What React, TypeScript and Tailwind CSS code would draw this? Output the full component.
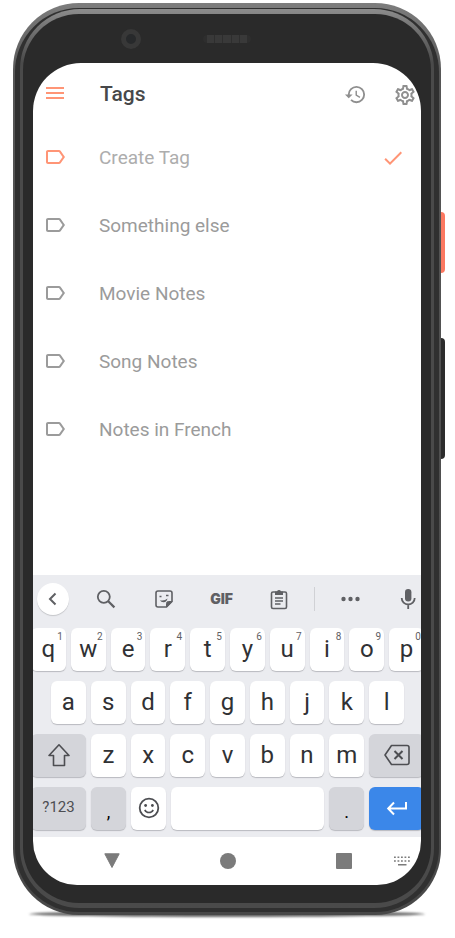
import { useState } from "react";
import type { ReactNode } from "react";
import {
  MdCheck,
  MdHistory,
  MdLabelOutline,
  MdMenu,
  MdOutlineSettings,
} from "react-icons/md";

const tags = ["Something else", "Movie Notes", "Song Notes", "Notes in French"];
const topRow = ["q", "w", "e", "r", "t", "y", "u", "i", "o", "p"];
const homeRow = ["a", "s", "d", "f", "g", "h", "j", "k", "l"];
const bottomRow = ["z", "x", "c", "v", "b", "n", "m"];

const keyTones = {
  light: "bg-white text-[#303134]",
  dark: "bg-[#d4d5da] text-[#4d4e52]",
  blue: "bg-[#3b87e9] text-white",
};

function Key({
  label,
  tone = "light",
  size = "min-w-0 flex-1",
  hint,
  children,
}: {
  label: string;
  tone?: keyof typeof keyTones;
  size?: string;
  hint?: string;
  children?: ReactNode;
}) {
  return (
    <button
      type="button"
      aria-label={label}
      className={`relative flex h-[43px] items-center justify-center rounded-md pb-0.5 text-2xl shadow-[0_1px_1px_#b9babf] ${size} ${keyTones[tone]}`}
    >
      {children ?? label}
      {hint && (
        <span className="absolute top-1 right-[3px] text-[10px] leading-[10px] text-[#5f6064]">
          {hint}
        </span>
      )}
    </button>
  );
}

function Tool({ label, children }: { label: string; children: ReactNode }) {
  return (
    <button
      type="button"
      aria-label={label}
      className="flex h-8 min-w-0 flex-1 items-center justify-center"
    >
      {children}
    </button>
  );
}

function Keyboard() {
  return (
    <section aria-label="Keyboard" className="bg-[#ebecf0] pb-[7px] text-[#5f6064]">
      <div className="-mr-4 flex h-[53px] items-center pb-1.5 pl-1">
        <button
          type="button"
          aria-label="Back"
          className="mr-2 flex size-8 items-center justify-center rounded-full bg-white shadow-[0_1px_1px_#c4c5c9]"
        >
          <svg viewBox="0 0 20 20" className="size-5" fill="none" stroke="currentColor" strokeWidth="2">
            <path d="M12.5 4.5 7 10l5.500 5.500" />
          </svg>
        </button>
        <Tool label="Search">
          <svg viewBox="0 0 20 20" className="size-5" fill="none" stroke="currentColor" strokeWidth="1.800">
            <circle cx="7.800" cy="7.800" r="6" />
            <path d="m12 12 6.400 6.400" strokeWidth="2.200" />
          </svg>
        </Tool>
        <Tool label="Stickers">
          <svg viewBox="0 0 20 20" className="size-5" fill="none" stroke="currentColor" strokeWidth="1.600">
            <path d="M4 2h12a2 2 0 0 1 2 2v8.500L12.500 18H4a2 2 0 0 1-2-2V4a2 2 0 0 1 2-2Z" />
            <path d="M18 12.500h-3.500a2 2 0 0 0-2 2V18Z" fill="currentColor" strokeWidth="1" />
            <path d="M5.500 7.500h2M12 6.500h2.500" />
            <path d="M6 11.200c3 .6 5.500 0 7.500-1.700-.4 2.500-2 3.800-4 3.700-1.600-.1-2.800-.8-3.500-2Z" fill="currentColor" stroke="none" />
          </svg>
        </Tool>
        <Tool label="GIF">
          <span className="font-['Inter',sans-serif] text-sm font-black">GIF</span>
        </Tool>
        <Tool label="Clipboard">
          <svg viewBox="0 0 20 22" className="h-[22px] w-5" fill="none" stroke="currentColor" strokeWidth="1.600">
            <rect x="2.500" y="4" width="15" height="16.500" rx="1.500" />
            <path d="M6 3.500h2a2.100 2.100 0 0 1 4 0h2v3.500H6Z" fill="currentColor" stroke="none" />
            <path d="M6 10h8M6 13h8M6 16h5.500" />
          </svg>
        </Tool>
        <span className="mx-1.5 h-6 w-px bg-[#d0d1d5]" />
        <Tool label="More">
          <svg viewBox="0 0 20 20" className="size-5" fill="currentColor">
            <circle cx="3.500" cy="10" r="2.200" />
            <circle cx="10.500" cy="10" r="2.200" />
            <circle cx="17.500" cy="10" r="2.200" />
          </svg>
        </Tool>
        <Tool label="Voice input">
          <svg viewBox="0 0 20 22" className="h-[22px] w-5" fill="none" stroke="currentColor" strokeWidth="1.800">
            <rect x="7" y="1" width="6.400" height="12.500" rx="3.200" fill="currentColor" stroke="none" />
            <path d="M3.700 10a6.500 6.500 0 0 0 13 0M10.200 16.500V21" />
          </svg>
        </Tool>
      </div>

      <div className="-mr-[3px] -ml-0.5 flex flex-col gap-2.5">
        <div className="flex gap-[5px]">
          {topRow.map((letter, i) => (
            <Key key={letter} label={letter} hint={String((i + 1) % 10)} />
          ))}
        </div>
        <div className="flex gap-[5px] px-5">
          {homeRow.map((letter) => (
            <Key key={letter} label={letter} />
          ))}
        </div>
        <div className="flex gap-[5px]">
          <Key label="Shift" tone="dark" size="w-[55px]">
            <svg viewBox="0 0 24 24" className="size-6" fill="none" stroke="currentColor" strokeWidth="1.600" strokeLinejoin="round">
              <path d="M12 1.800 22 12.500h-4.500V22.500h-11V12.500H2Z" />
            </svg>
          </Key>
          {bottomRow.map((letter) => (
            <Key key={letter} label={letter} />
          ))}
          <Key label="Backspace" tone="dark" size="w-[55px]">
            <svg viewBox="0 0 26 22" className="h-[22px] w-[26px]" fill="none" stroke="currentColor" strokeWidth="1.600" strokeLinejoin="round">
              <path d="M7.500 1.500h15.500a2 2 0 0 1 2 2v15a2 2 0 0 1-2 2H7.500L1 11Z" />
              <path d="m10.500 7 8 8m0-8-8 8" strokeWidth="2" />
            </svg>
          </Key>
        </div>
        <div className="flex gap-[5px]">
          <Key label="Symbols" tone="dark" size="w-[55px]">
            <span className="text-[15px]">?123</span>
          </Key>
          <Key label="Comma" tone="dark" size="w-[35px]">
            <span className="pt-2 text-lg text-black">,</span>
          </Key>
          <Key label="Emoji" size="w-[35px]">
            <svg viewBox="0 0 22 22" className="size-[22px]" fill="none" stroke="#4d4e52" strokeWidth="1.800">
              <circle cx="11" cy="11" r="9.300" />
              <circle cx="7.600" cy="8.500" r="1.400" fill="#4d4e52" stroke="none" />
              <circle cx="14.400" cy="8.500" r="1.400" fill="#4d4e52" stroke="none" />
              <path d="M6.800 12.800c1.700 3.600 6.700 3.600 8.400 0" strokeWidth="1.600" />
            </svg>
          </Key>
          <Key label="Space">{" "}</Key>
          <Key label="Period" tone="dark" size="w-[35px]">
            <span className="pt-2 text-lg text-black">.</span>
          </Key>
          <Key label="Enter" tone="blue" size="w-[55px]">
            <svg viewBox="0 0 22 16" className="h-4 w-[22px]" fill="none" stroke="currentColor" strokeWidth="2">
              <path d="M20 2v6.500H2.500M8 2.500 2.200 8.500 8 14.500" />
            </svg>
          </Key>
        </div>
      </div>
    </section>
  );
}

function SystemBar() {
  return (
    <nav
      aria-label="System"
      className="grid h-12 grid-cols-[2fr_2fr_1fr_auto] items-center bg-white pr-[11px] pl-[71px] text-[#7b7b7b]"
    >
      <button type="button" aria-label="Hide keyboard" className="w-4">
        <svg viewBox="0 0 16 16" className="size-4" fill="currentColor" stroke="currentColor" strokeLinejoin="round">
          <path d="M.8.8h14.400L8 14.500Z" />
        </svg>
      </button>
      <button type="button" aria-label="Home" className="size-4 rounded-full bg-[#7b7b7b]" />
      <button type="button" aria-label="Recent apps" className="size-4 rounded-[1px] bg-[#7b7b7b]" />
      <button type="button" aria-label="Switch keyboard" className="w-4">
        <svg viewBox="0 0 16 10" className="h-2.5 w-4" fill="none" stroke="currentColor" strokeWidth="1.600">
          <path d="M0 1.200h16M0 5h16" strokeDasharray="1.800 1.700" />
          <path d="M4 8.800h8.500" />
        </svg>
      </button>
    </nav>
  );
}

function TagsScreen() {
  const [name, setName] = useState("");
  return (
    <div className="bg-white pb-[111px]">
      <header className="flex h-[61px] items-center pr-1 pl-2.5 text-[#8f8f8f]">
        <button type="button" aria-label="Menu" className="mr-[33px] pb-0.5 text-[#ff9576]">
          <MdMenu size={24} />
        </button>
        <h1 className="flex-1 pt-0.5 text-[21px] font-medium text-[#47484a]">Tags</h1>
        <button type="button" aria-label="History" className="mr-[26px] pt-0.5">
          <MdHistory size={23} />
        </button>
        <button type="button" aria-label="Settings" className="pt-0.5">
          <MdOutlineSettings size={24} />
        </button>
      </header>
      <form
        className="flex h-[68px] items-center pr-4 pl-2.5 text-[#ff9576]"
        onSubmit={(event) => event.preventDefault()}
      >
        <MdLabelOutline size={24} className="mr-8 box-content shrink-0 pb-0.5" />
        <input
          aria-label="Create Tag"
          placeholder="Create Tag"
          value={name}
          onChange={(event) => setName(event.target.value)}
          className="min-w-0 flex-1 pt-px text-[19px] text-[#8f8f8f] outline-none placeholder:text-[#adadad]"
        />
        <button type="submit" aria-label="Save tag">
          <MdCheck size={24} />
        </button>
      </form>
      <ul>
        {tags.map((tag) => (
          <li key={tag}>
            <button
              type="button"
              className="flex h-[68px] w-full items-center pl-2.5 text-left text-[19px] text-[#9b9b9b]"
            >
              <MdLabelOutline size={24} className="mr-8 box-content shrink-0 pb-0.5" />
              {tag}
            </button>
          </li>
        ))}
      </ul>
    </div>
  );
}

export default function App() {
  return (
    <main className="overflow-hidden bg-white pt-[3px] pr-3.5 pb-5 pl-[13px] font-['Roboto',sans-serif]">
      <div className="relative">
        <span className="absolute top-[209px] -right-1 h-[61px] w-1 rounded-r-sm bg-[#fb7860]" />
        <span className="absolute top-[335px] -right-1 h-[121px] w-1 rounded-r-sm bg-[#2c2c2c]" />
        <span className="absolute inset-x-4 -bottom-[2px] h-1.5 rounded-[50%] bg-[#666] blur-[1px]" />
        <div className="relative rounded-[66px] bg-linear-to-b from-[#7d7d7d] via-[#565656] via-8% to-[#484848] px-0.5 pt-[5px] pb-[3px]">
          <div className="rounded-[64px] bg-[#303030] px-[5px] pt-px pb-1">
            <div className="rounded-[60px] bg-linear-to-b from-[#8c8c8c] via-[#4a4a4a] via-6% to-[#4a4a4a] px-[3px] pt-[5px] pb-[5px]">
              <div className="rounded-[56px] bg-[#2a2a2a] px-2.5 pb-[18px]">
                <div className="flex h-[49px] items-center pl-[88px]">
                  <span className="size-5 rounded-full border-5 border-[#383838] bg-[#27292b]" />
                  <span className="ml-[62px] flex h-2 w-12 gap-px rounded-full bg-[#2e2e2e] px-1">
                    {[1, 2, 3, 4, 5].map((slot) => (
                      <span key={slot} className="flex-1 bg-[#393939]" />
                    ))}
                  </span>
                </div>
                <div className="overflow-hidden rounded-t-[48px] rounded-b-[44px]">
                  <TagsScreen />
                  <Keyboard />
                  <SystemBar />
                </div>
              </div>
            </div>
          </div>
        </div>
      </div>
    </main>
  );
}
